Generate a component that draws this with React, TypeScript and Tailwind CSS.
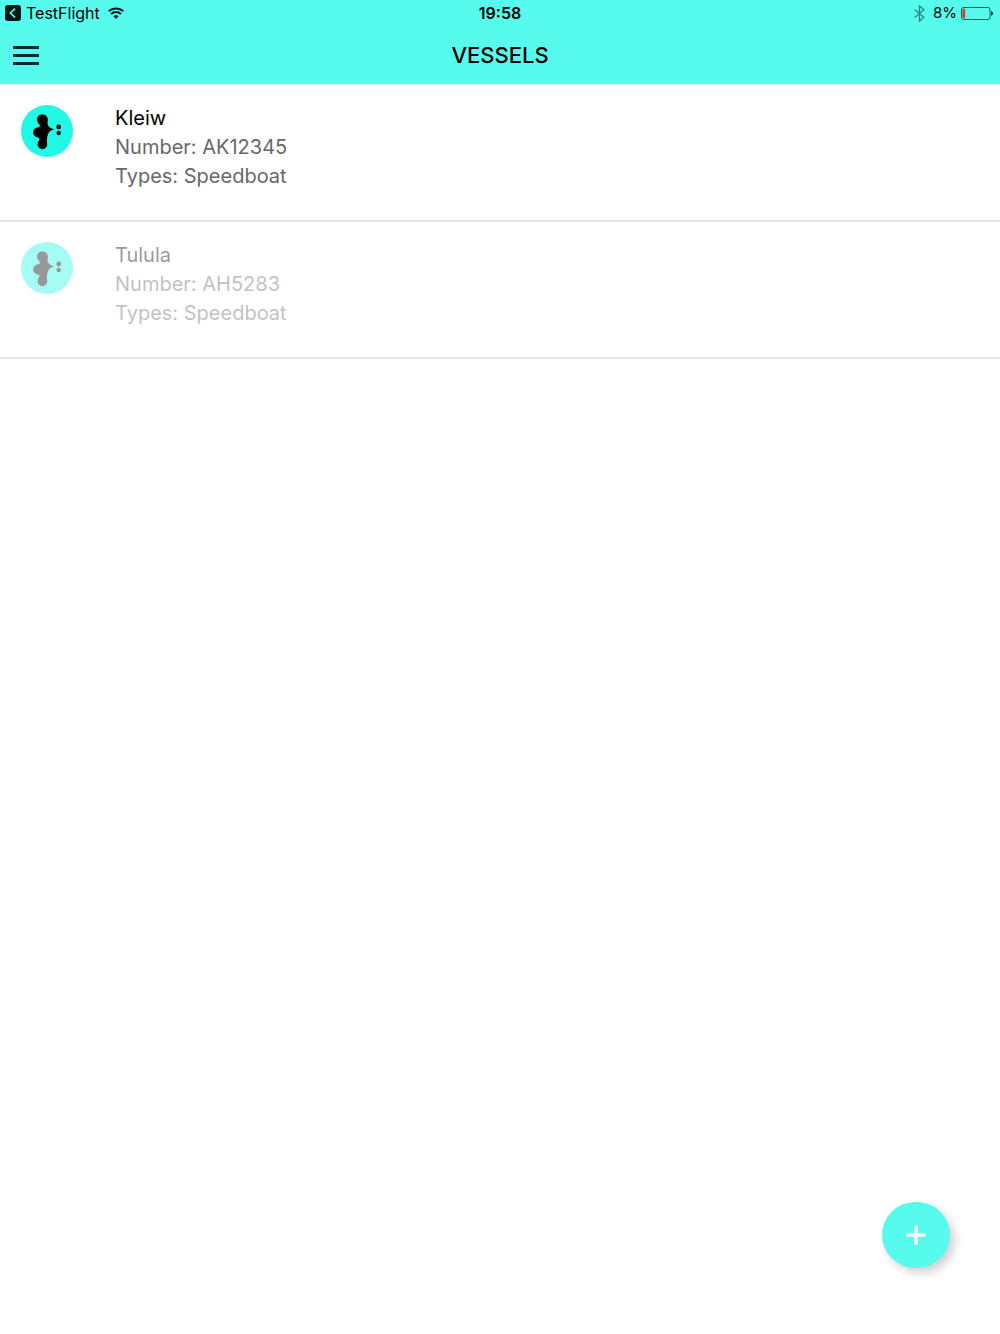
import React from 'react';

interface Vessel {
    id: number;
    name: string;
    number: string;
    types: string;
    active: boolean;
}

const vessels: Vessel[] = [
    { id: 1, name: 'Kleiw', number: 'AK12345', types: 'Speedboat', active: true },
    { id: 2, name: 'Tulula', number: 'AH5283', types: 'Speedboat', active: false },
];

const BackIcon = () => (
    <svg width="16" height="16" viewBox="0 0 16 16" fill="none" aria-hidden="true">
        <rect width="16" height="16" rx="3" fill="#051a18" />
        <path d="M10 3.6 5.4 8l4.6 4.4" stroke="#56fbee" strokeWidth="1.7" />
    </svg>
);

const WifiIcon = () => (
    <svg width="16" height="12" viewBox="0 0 16 12" fill="none" aria-hidden="true">
        <path d="M.7 4.4a10.4 10.4 0 0 1 14.6 0" stroke="#062522" strokeWidth="2" />
        <path d="M3.1 7.1a6.9 6.9 0 0 1 9.8 0" stroke="#062522" strokeWidth="2" />
        <path d="M8 12 5.4 9.4a3.7 3.7 0 0 1 5.2 0z" fill="#062522" />
    </svg>
);

const BluetoothIcon = () => (
    <svg width="11" height="17" viewBox="0 0 11 17" fill="none" aria-hidden="true">
        <path d="m.7 4.5 9.2 7.7-4.4 3.9V.9l4.400 3.900L.7 12.500" stroke="#278a83" strokeWidth="1.300" />
    </svg>
);

const BatteryIcon = () => (
    <svg width="32" height="13" viewBox="0 0 32 13" fill="none" aria-hidden="true">
        <rect x=".5" y=".5" width="28.5" height="12" rx="2" stroke="#1c5954" />
        <rect x="1.5" y="1.7" width="2.6" height="9.6" rx=".6" fill="#f0302c" />
        <path d="M30 4.300c1.300.3 2 1.200 2 2.200s-.7 1.900-2 2.200z" fill="#062522" />
    </svg>
);

const PropellerLogo = () => (
    <svg className="mt-px size-13 shrink-0" viewBox="0 0 52 52" aria-hidden="true">
        <circle cx="26" cy="26" r="26" fill="#21f8e6" />
        {/* Blades */}
        <circle cx="21.4" cy="14.6" r="5.4" />
        <circle cx="17.2" cy="27.4" r="5" />
        <circle cx="21.4" cy="39.4" r="4.8" />
        {/* Hub, tapering to the shaft */}
        <path d="M17.5 18.300c2 1.500 2 3.400-.6 4.100l-1 9.700c2.800.1 3.400 2.200 1.200 5.200l9 1c-.6-4.300.2-8.700 2-11 1.100-1.400 2.700-2.200 5.300-3-2.800-.7-5-1.700-6-3.300-.9-1.500-1-2.800-.9-5.700z" />
        {/* Bubbles */}
        <circle cx="37.700" cy="22" r="2.400" />
        <circle cx="37.700" cy="28" r="2.200" />
    </svg>
);

const VesselRow = ({ vessel }: { vessel: Vessel }) => (
    <li className="border-b-2 border-[#e5e5e5]">
        <div className={`flex gap-[42px] px-[21px] pt-[19px] pb-[29px] ${vessel.active ? '' : 'opacity-40'}`}>
            <PropellerLogo />
            <div className="text-[20px] leading-[29px] text-[#686868]">
                <h2 className="text-black">{vessel.name}</h2>
                <p>Number: {vessel.number}</p>
                <p>Types: {vessel.types}</p>
            </div>
        </div>
    </li>
);

const App: React.FC = () => {
    return (
        <div className="min-h-screen bg-white font-['Inter','Roboto',sans-serif] text-black">
            <header className="border-b border-[#e3f3f2] bg-[#56fbee]">
                {/* Status bar */}
                <div className="grid h-[26px] grid-cols-[1fr_auto_1fr] items-center text-[16px] leading-5">
                    <div className="flex items-center gap-2 pl-[5px]">
                        <button type="button" className="flex items-center gap-[5px]">
                            <BackIcon />
                            TestFlight
                        </button>
                        <WifiIcon />
                    </div>
                    <time className="font-semibold">19:58</time>
                    <div className="flex items-center justify-end gap-2 pr-[7px]">
                        <BluetoothIcon />
                        <div className="flex items-center gap-1">
                            <span className="text-[15px]">8%</span>
                            <BatteryIcon />
                        </div>
                    </div>
                </div>

                {/* Title bar */}
                <div className="grid h-[58px] grid-cols-[1fr_auto_1fr] items-center px-[13px]">
                    <button type="button" aria-label="Menu" className="flex w-[26px] flex-col gap-[5px]">
                        <span className="h-[3px] bg-[#082c29]" />
                        <span className="h-[3px] bg-[#082c29]" />
                        <span className="h-[3px] bg-[#082c29]" />
                    </button>
                    <h1 className="text-[22px] leading-7 font-medium">VESSELS</h1>
                </div>
            </header>

            <main>
                <ul>
                    {vessels.map(vessel => (
                        <VesselRow key={vessel.id} vessel={vessel} />
                    ))}
                </ul>
            </main>

            {/* Add vessel */}
            <button
                type="button"
                aria-label="Add vessel"
                className="fixed right-[50px] bottom-[66px] flex h-[66px] w-[68px] items-center justify-center rounded-full bg-[#56fbee] shadow-[5px_5px_10px_rgba(0,0,0,0.18)]"
            >
                <svg width="20" height="20" viewBox="0 0 20 20" fill="none" aria-hidden="true">
                    <path d="M10 1.8v16.4M1.800 10h16.400" stroke="white" strokeWidth="3.400" strokeLinecap="round" />
                </svg>
            </button>
        </div>
    );
};

export default App;
